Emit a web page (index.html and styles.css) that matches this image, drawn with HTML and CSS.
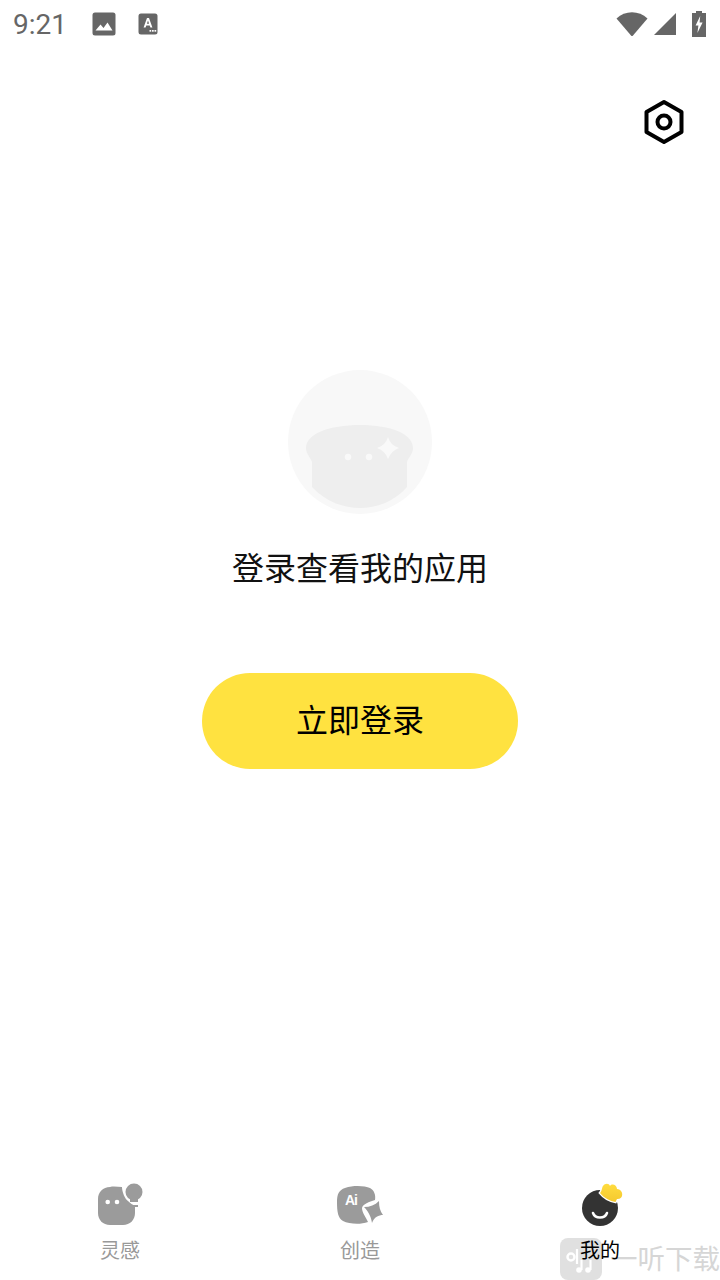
FILE: index.html
```html
<!DOCTYPE html>
<html lang="zh-CN">

<head>
    <meta charset="UTF-8">
    <meta name="viewport" content="width=device-width, initial-scale=1.0">
    <title>我的</title>
    <link rel="stylesheet" href="styles.css">
</head>

<body>
    <div class="page">
        <div class="status-bar">
            <span class="time">9:21</span>
            <svg class="status-photo" width="24" height="24" viewBox="0 0 24 24">
                <rect x="0.5" y="0.5" width="23" height="23" rx="2.5" fill="#666"/>
                <path d="M3.5 18.5 L8.5 12.5 L11.5 16 L15.5 10.5 L20.5 18.5 Z" fill="#fff"/>
            </svg>
            <svg class="status-a" width="20" height="22" viewBox="0 0 20 22">
                <rect x="0.5" y="0.5" width="19" height="21" rx="2.5" fill="#666"/>
                <path d="M5.6 14.5 L9 5 H11 L14.4 14.5 H12.4 L11.7 12.4 H8.3 L7.6 14.5 Z M8.9 10.7 H11.1 L10 7.4 Z" fill="#fff"/>
                <rect x="11.5" y="17" width="1.7" height="1.7" fill="#fff"/>
                <rect x="14" y="17" width="1.7" height="1.7" fill="#fff"/>
                <rect x="16.5" y="17" width="1.7" height="1.7" fill="#fff"/>
            </svg>
            <div class="status-right">
                <svg width="32" height="26" viewBox="0 0 32 26">
                    <path d="M0.5 7.5 C9 -0.8 23 -0.8 31.5 7.5 L17 24.5 Q16 25.5 15 24.5 Z" fill="#666"/>
                </svg>
                <svg class="status-cell" width="23" height="23" viewBox="0 0 23 23">
                    <path d="M0 22 L22 0 V22 Z" fill="#666"/>
                </svg>
                <svg width="14" height="26" viewBox="0 0 14 26">
                    <path d="M4 0 H10 V2 H14 V26 H0 V2 H4 Z" fill="#666"/>
                    <path d="M8.2 5 L3.6 14.6 H6.4 L5.4 22 L10.6 11.4 H7.6 Z" fill="#fff"/>
                </svg>
            </div>
        </div>

        <div class="top-bar">
            <svg width="42" height="46" viewBox="0 0 42 46">
                <path d="M21 3 L38.5 13 V33 L21 43 L3.500 33 V13 Z" fill="none" stroke="#000" stroke-width="4" stroke-linejoin="round"/>
                <circle cx="21" cy="23" r="6.500" fill="none" stroke="#000" stroke-width="4"/>
            </svg>
        </div>

        <div class="content">
            <svg class="avatar" width="144" height="144" viewBox="0 0 144 144">
                <circle cx="72" cy="72" r="72" fill="#f8f8f8"/>
                <path d="M72 55 C103 55 125 64 125 78 C125 84 120 88 119 92 V117 C106 132 88 138 72 138 C56 138 38 132 24 117 V92 C23 88 18 84 18 78 C18 64 41 55 72 55 Z" fill="#eeeeee"/>
                <circle cx="60" cy="87" r="3.200" fill="#f9f9f9"/>
                <circle cx="81" cy="87" r="3.200" fill="#f9f9f9"/>
                <path d="M100 67 Q102.500 75.500 111 78 Q103 81 100 89 Q97.500 81 89 78 Q97.500 75.500 100 67 Z" fill="#f9f9f9"/>
            </svg>
            <p class="hint">登录查看我的应用</p>
            <button class="login-btn">立即登录</button>
        </div>

        <div class="tab-bar">
            <div class="tab">
                <svg width="48" height="44" viewBox="0 0 48 44">
                    <path d="M14 5 C18 4 22 5 26 5 C26 10 29 17 32 19 C34 21 37 23 39 24 V31 C39 38 34 43 27 43 H14 C7 43 2 38 2 31 V17 C2 10 7 5 14 5 Z" fill="#9b9b9b"/>
                    <circle cx="38" cy="10" r="8.500" fill="#9b9b9b"/>
                    <path d="M34 15 H42 V20 H34 Z" fill="#9b9b9b"/>
                    <rect x="34" y="23" width="8" height="2" fill="#9b9b9b"/>
                    <circle cx="11.700" cy="20" r="2.300" fill="#fff"/>
                    <circle cx="21" cy="20" r="2.300" fill="#fff"/>
                </svg>
                <span class="tab-label">灵感</span>
            </div>
            <div class="tab">
                <svg width="48" height="44" viewBox="0 0 48 44">
                    <path d="M9 6 C18 3 29 4 34 6 C38 8 40 13 39 18 C33 20 27 22 26 26 C26 31 30 35 32 40 C24 43 13 42 7 39 C2 36 1 30 1 20 C1 12 3 8 9 6 Z" fill="#9b9b9b"/>
                    <text x="9" y="23" class="ai-text">Ai</text>
                    <path d="M43 19 C43 25 44 29 47 33 C43 33 38 35 36 41 C35 34 32 29 28 25 C34 25 39 23 43 19 Z" fill="#9b9b9b"/>
                </svg>
                <span class="tab-label">创造</span>
            </div>
            <div class="tab tab-active">
                <svg width="48" height="44" viewBox="0 0 48 44">
                    <defs>
                        <linearGradient id="crownFill" x1="0" y1="0" x2="0" y2="1">
                            <stop offset="0" stop-color="#ffdc3e"/>
                            <stop offset="1" stop-color="#f5c92f"/>
                        </linearGradient>
                    </defs>
                    <circle cx="24" cy="26" r="18" fill="#333"/>
                    <path d="M17 31 C19 37 29 37 31 31" fill="none" stroke="#fff" stroke-width="2.500" stroke-linecap="round"/>
                    <path class="crown" d="M24 11 C26 9 26 5 27 4 C29 1 33 1 34 4 C36 1 41 3 41 7 C45 7 47 11 46 14 C45 17 42 17 41 17 L39.500 20 C34 19 28 16 24 11 Z"/>
                </svg>
                <span class="tab-label">我的</span>
            </div>
        </div>

        <div class="watermark">
            <div class="wm-logo">
                <svg width="30" height="30" viewBox="0 0 30 30">
                    <circle cx="5" cy="13" r="3.500" fill="none" stroke="#fff" stroke-width="2.500"/>
                    <path d="M11 5 V20 M15.500 16 V26 M24.500 16 V26" stroke="#fff" stroke-width="2.200" fill="none"/>
                    <circle cx="13" cy="26" r="2.800" fill="#fff"/>
                    <circle cx="22" cy="26" r="2.800" fill="#fff"/>
                </svg>
            </div>
            <span class="wm-text">一听下载</span>
        </div>
    </div>
</body>

</html>
```

FILE: styles.css
```css
body {
    margin: 0;
    background-color: #fff;
    font-family: "Noto Sans CJK SC", "Noto Sans", sans-serif;
}

.page {
    position: relative;
    width: 720px;
    height: 1280px;
    overflow: hidden;
    display: flex;
    flex-direction: column;
}

.status-bar {
    height: 48px;
    display: flex;
    align-items: center;
    padding: 0 14px 0 13px;
    flex-shrink: 0;
}

.time {
    font-family: Roboto, sans-serif;
    font-size: 28px;
    color: #666;
    width: 79px;
}

.status-a {
    margin-left: 22px;
}

.status-right {
    margin-left: auto;
    display: flex;
    align-items: center;
}

.status-cell {
    margin: 0 15px 0 6px;
}

.top-bar {
    height: 148px;
    display: flex;
    justify-content: flex-end;
    align-items: center;
    padding-right: 35px;
    flex-shrink: 0;
}

.content {
    flex: 1;
    display: flex;
    flex-direction: column;
    align-items: center;
    padding-top: 174px;
}

.hint {
    margin: 30px 0 0;
    font-size: 32px;
    line-height: 44px;
    color: #111;
}

.login-btn {
    margin-top: 85px;
    width: 316px;
    height: 96px;
    padding: 0 0 6px;
    border: none;
    border-radius: 48px;
    background-color: #ffe240;
    color: #000;
    font-family: inherit;
    font-size: 32px;
}

.tab-bar {
    display: flex;
    height: 104px;
    box-sizing: border-box;
    padding-top: 6px;
    flex-shrink: 0;
}

.tab {
    width: 240px;
    display: flex;
    flex-direction: column;
    align-items: center;
}

.tab-label {
    margin-top: 10px;
    font-size: 20px;
    line-height: 28px;
    color: #999;
}

/* sits above the watermark */
.tab-active .tab-label {
    position: relative;
    z-index: 1;
    color: #000;
}

.ai-text {
    font-family: "Liberation Sans", sans-serif;
    font-size: 14px;
    font-weight: bold;
    letter-spacing: -1px;
    fill: #fff;
}

.crown {
    fill: url(#crownFill);
    stroke: #fff;
    stroke-width: 2.5px;
    paint-order: stroke;
}

.watermark {
    position: absolute;
    left: 560px;
    top: 1238px;
    display: flex;
    align-items: flex-start;
    gap: 8px;
    opacity: 0.6;
}

.wm-logo {
    width: 42px;
    height: 42px;
    border-radius: 8px;
    background-color: #ccc;
    display: flex;
    align-items: center;
    justify-content: center;
}

.wm-text {
    font-size: 27.500px;
    line-height: 39px;
    color: #bbb;
}
```
